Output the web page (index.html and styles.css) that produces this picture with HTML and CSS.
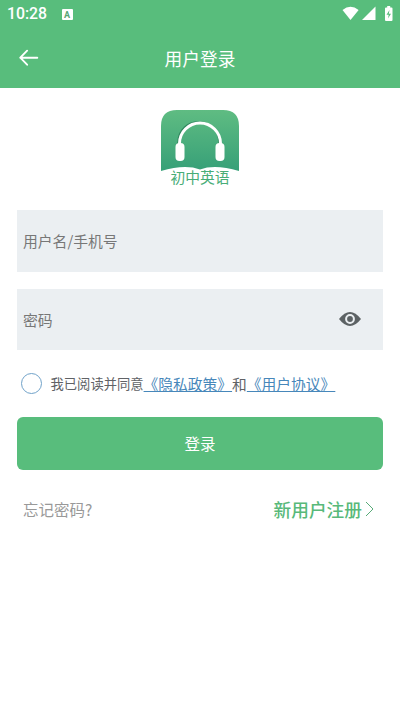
FILE: index.html
```html
<!DOCTYPE html>
<html lang="zh-CN">
<head>
<meta charset="utf-8">
<title>用户登录</title>
<link rel="stylesheet" href="styles.css">
</head>
<body>
<div class="status">
  <span class="time">10:28</span>
  <span class="badge">A</span>
  <svg class="signals" width="52" height="18" viewBox="0 0 52 18" fill="#fff">
    <path d="M1.500 4Q9.500-2.600 17.600 4L9.500 14Z"/>
    <path d="M34.500 0.500V14H21Z"/>
    <path d="M45 1.500h1.200V0h3v1.500h1.300q1 0 1 1v11.500q0 1-1 1H45q-1 0-1-1V2.500q0-1 1-1z"/>
    <path d="M48.500 4L45.500 8.700h2.200L47 12.500l3-4.700h-2.200z" fill="#58bd7c"/>
  </svg>
</div>
<header class="bar">
  <svg class="back" width="20" height="18" viewBox="0 0 20 18" fill="none" stroke="#fff" stroke-width="1.900" stroke-linecap="round" stroke-linejoin="round"><path d="M18.300 8.700H1.300M8.100 1.700L1.300 8.700l6.800 7"/></svg>
  <h1 class="title">用户登录</h1>
</header>
<main class="page">
  <div class="logo">
    <svg width="78" height="61" viewBox="0 0 78 61">
      <defs><linearGradient id="g" x1="0" y1="0" x2="0" y2="1"><stop offset="0" stop-color="#5fbc82"/><stop offset="1" stop-color="#37a078"/></linearGradient></defs>
      <path d="M0 61V16Q0 0 16 0H62Q78 0 78 16V61Q54 54 39 59.500Q24 54 0 61Z" fill="url(#g)"/>
      <path d="M17 36V33C17 5 58 5 58 33" fill="none" stroke="#32885f" stroke-width="1.500"/>
      <path d="M18.500 40V33.500A20.500 20.500 0 0 1 59.500 33.500V40" fill="none" stroke="#fff" stroke-width="3"/>
      <rect x="14.500" y="33" width="9" height="18" rx="4" fill="#fff"/>
      <rect x="54.500" y="33" width="9" height="18" rx="4" fill="#fff"/>
    </svg>
    <span class="name">初中英语</span>
  </div>
  <div class="field">用户名/手机号</div>
  <div class="field">密码
    <svg width="22" height="14" viewBox="0 0 22 14"><path d="M0 7Q11-7 22 7Q11 21 0 7Z" fill="#5c6264"/><circle cx="11" cy="7" r="3.900" fill="#5c6264" stroke="#ebeff2" stroke-width="2"/></svg>
  </div>
  <div class="agree"><span class="radio"></span><span class="terms">我已阅读并同意</span><a class="link">《隐私政策》</a><span>和</span><a class="link">《用户协议》</a></div>
  <div class="login">登录</div>
  <div class="links">
    <span class="forgot">忘记密码?</span>
    <span class="register">新用户注册<svg width="9" height="16" viewBox="0 0 9 16" fill="none" stroke="#58aa78" stroke-width="1"><path d="M1 1l7 7-7 7"/></svg></span>
  </div>
</main>
</body>
</html>
```
FILE: styles.css
```css
* { box-sizing: border-box; }
body {
  margin: 0;
  background: #fff;
  font-family: "Noto Sans CJK SC", sans-serif;
  color: #606266;
}
svg { display: block; flex: none; }
.status {
  display: flex;
  align-items: center;
  height: 28px;
  padding: 0 7px;
  background: #58bd7c;
  color: #fff;
}
.time { width: 54.5px; font: 500 15.8px/28px Roboto, sans-serif; }
.badge {
  width: 11px;
  height: 11px;
  border-radius: 1px;
  background: #fff;
  color: #58a575;
  font: bold 9px/12px Roboto, sans-serif;
  text-align: center;
}
.signals { margin: 2px 0 0 auto; }
.bar {
  display: flex;
  align-items: center;
  height: 60px;
  padding: 0 19px;
  background: #58bd7c;
}
.title {
  flex: 1;
  margin: 0 20px 0 0;
  color: #fff;
  font-size: 17.7px;
  font-weight: 400;
  line-height: 28px;
  text-align: center;
}
.page { padding: 22px 17px 0; }
.logo {
  display: flex;
  flex-direction: column;
  align-items: center;
  height: 100px;
}
.name { margin-top: -4px; color: #48ad77; font-size: 14.8px; line-height: 20px; }
.field {
  display: flex;
  align-items: center;
  justify-content: space-between;
  height: 61.5px;
  margin-bottom: 17px;
  padding: 0 22px 0 6px;
  background: #ebeff2;
  color: #777;
  font-size: 14.8px;
}
.agree {
  display: flex;
  align-items: center;
  height: 33px;
  padding-left: 4px;
  font-size: 14.75px;
  line-height: 22px;
}
.radio {
  width: 21px;
  height: 21px;
  margin-right: 8.5px;
  border: 1.5px solid #70a2c9;
  border-radius: 50%;
}
.terms { font-size: 13.3px; }
.link { color: #4787ba; text-decoration: underline; text-decoration-thickness: 1px; }
.login {
  height: 53px;
  margin-top: 17px;
  border-radius: 6px;
  background: #58bd7c;
  color: #fff;
  font-size: 15.5px;
  line-height: 53px;
  text-align: center;
}
.links {
  display: flex;
  align-items: center;
  justify-content: space-between;
  height: 44px;
  margin-top: 17px;
  padding: 0 9px 0 6px;
}
.forgot { color: #999; font-size: 15.5px; }
.register { display: flex; align-items: center; gap: 3px; color: #58b97a; font-size: 17.7px; font-weight: 500; }
```
